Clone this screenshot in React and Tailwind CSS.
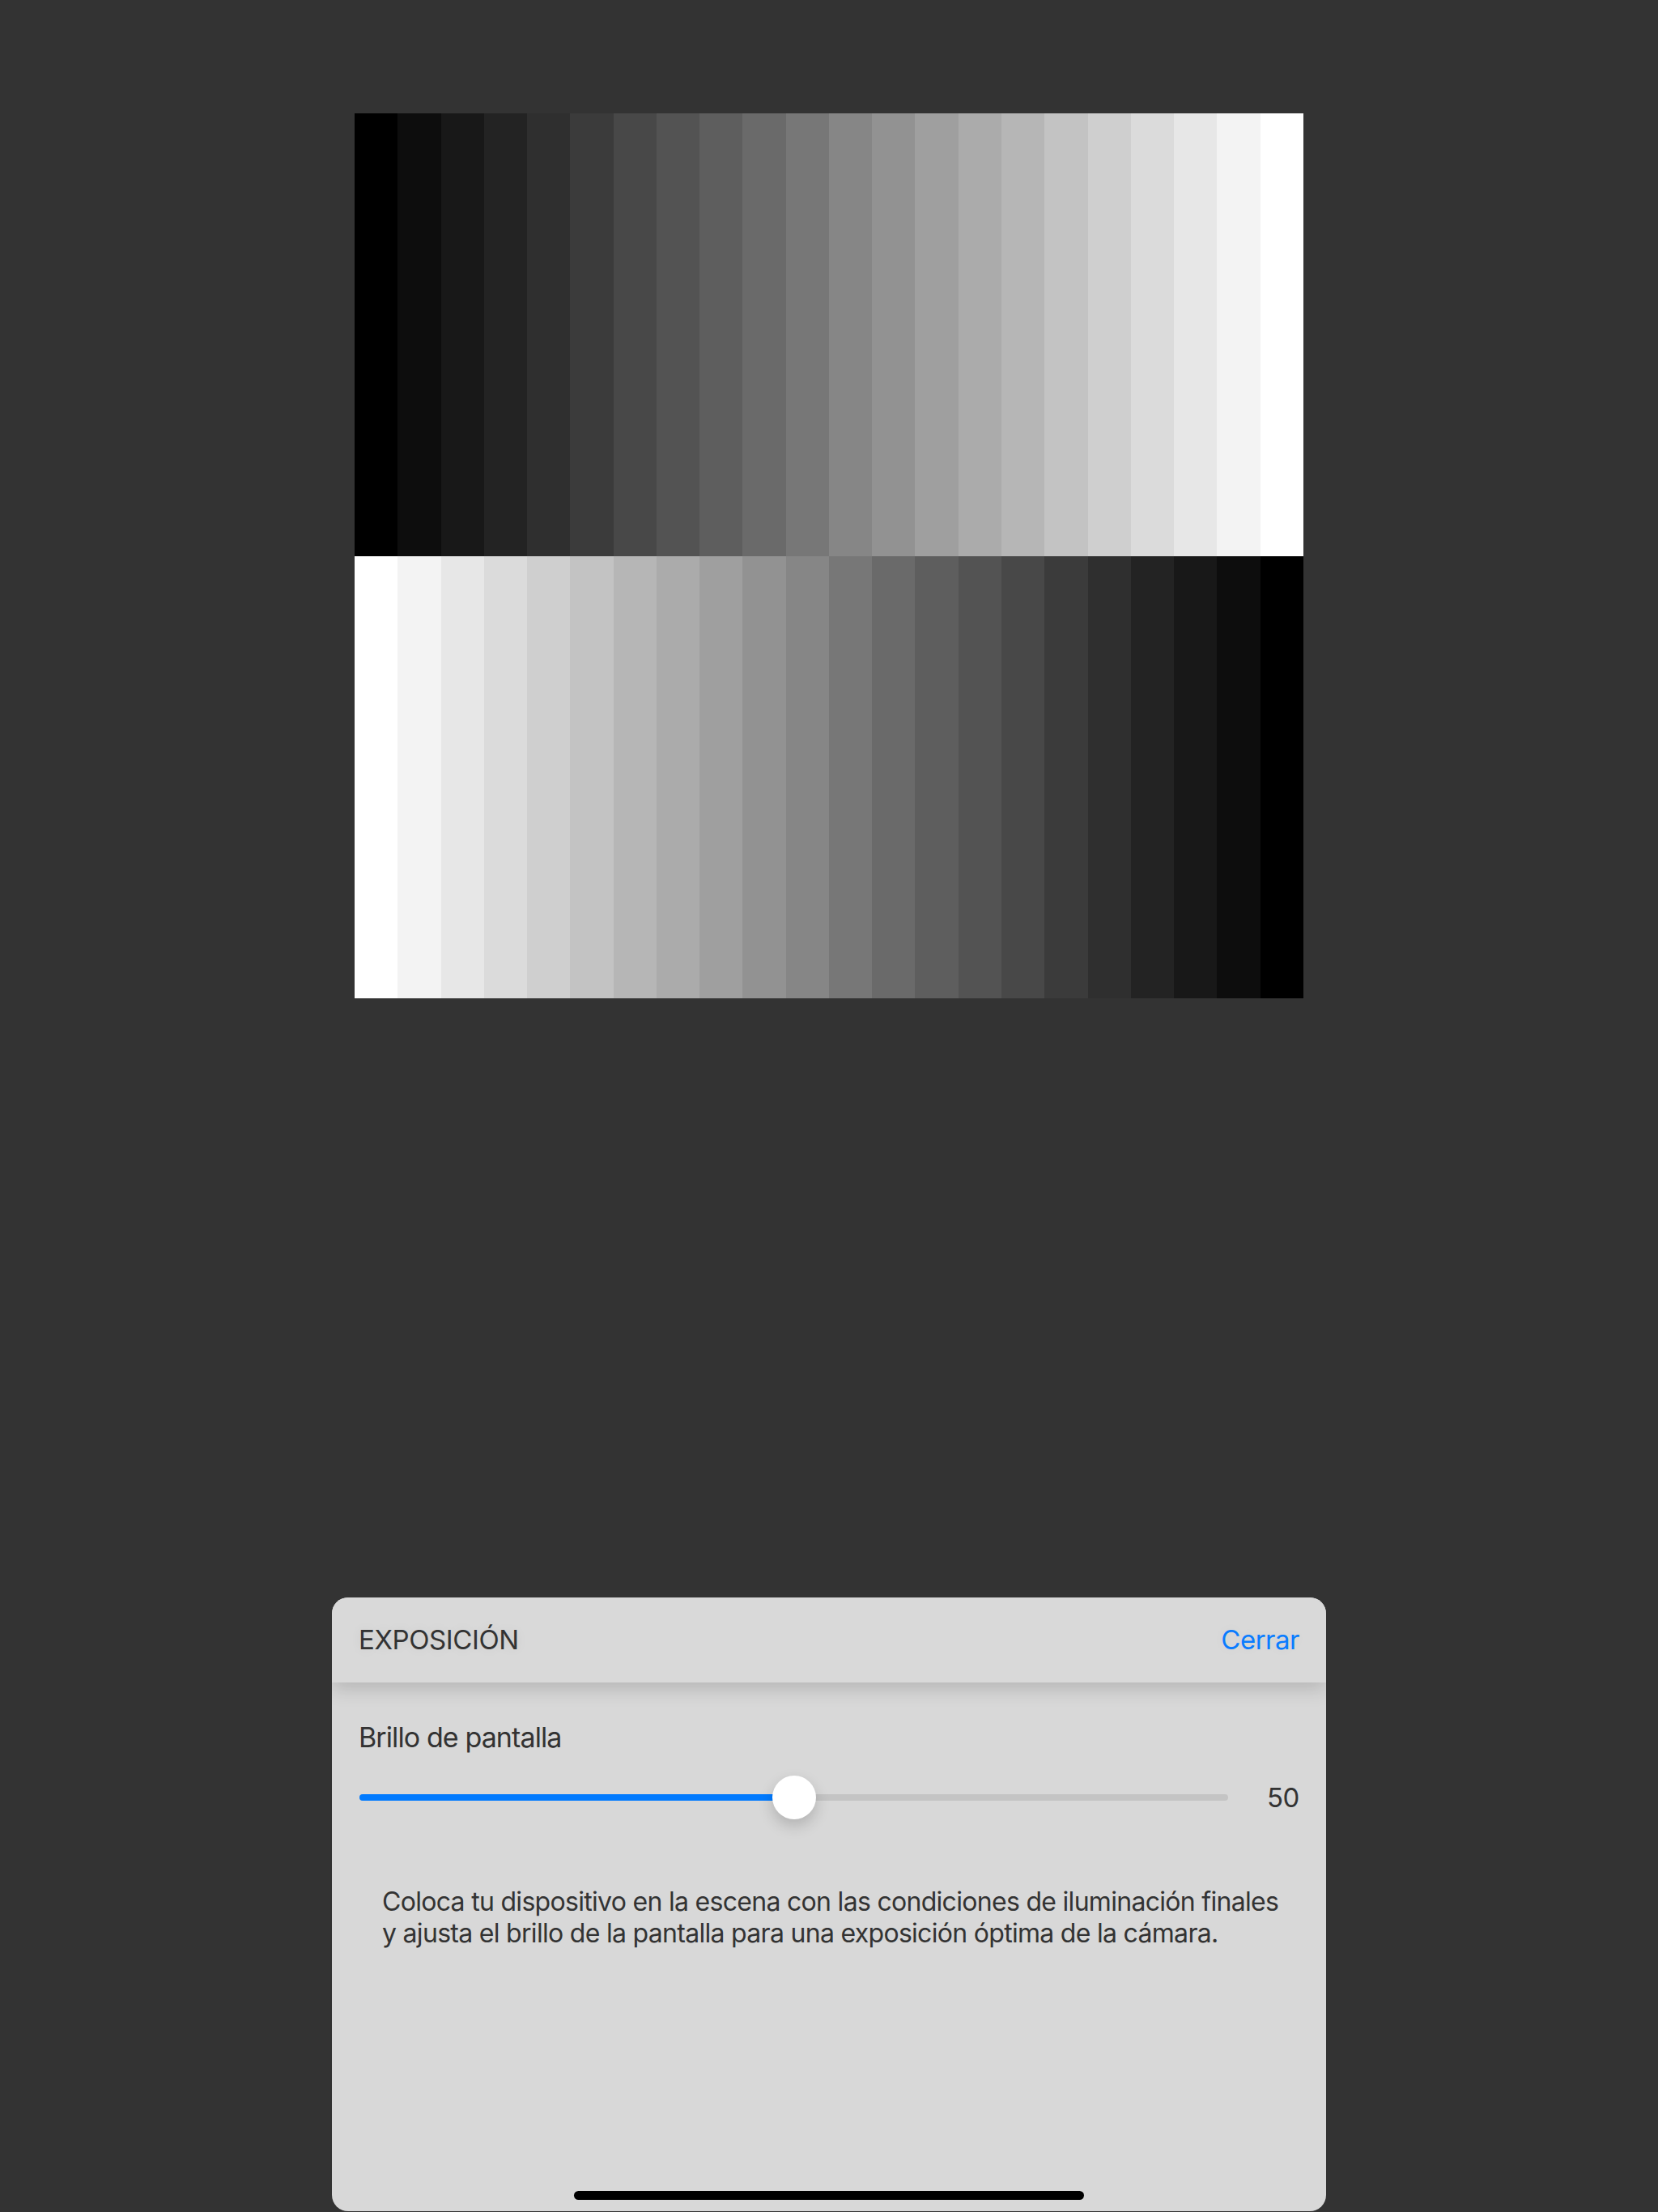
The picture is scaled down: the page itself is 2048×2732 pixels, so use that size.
import React from "react";

const TONES = [
  "#000000", "#0d0d0d", "#181818", "#232323", "#2f2f2f", "#3b3b3b",
  "#484848", "#535353", "#5e5e5e", "#6a6a6a", "#777777", "#868686",
  "#929292", "#9f9f9f", "#ababab", "#b6b6b6", "#c3c3c3", "#cfcfcf",
  "#dbdbdb", "#e7e7e7", "#f3f3f3", "#ffffff",
];

function Row({ tones }) {
  return (
    <div className="flex h-[546.5px] w-full">
      {tones.map((c, i) => (
        <div key={i} className="flex-1 h-full" style={{ backgroundColor: c }} />
      ))}
    </div>
  );
}

export default function App() {
  return (
    <div
      className="h-[2732px] w-full bg-[#333333] flex flex-col items-center overflow-hidden"
      style={{ fontFamily: "Inter, 'Noto Sans', 'Liberation Sans', sans-serif" }}
    >
      <div className="mt-[140px] w-[1172px] flex flex-col">
        <Row tones={TONES} />
        <Row tones={[...TONES].reverse()} />
      </div>

      <div className="mt-auto mb-[1px] w-[1228px] h-[758px] bg-[#d8d8d8] rounded-[20px] flex flex-col overflow-hidden">
        <div className="relative z-10 h-[105px] shrink-0 bg-[#d9d9d9] px-[33px] flex items-center justify-between shadow-[0_8px_22px_rgba(0,0,0,0.16)]">
          <span className="text-[33px] leading-none tracking-[-0.4px] text-[#333333] [text-shadow:0_0_14px_rgba(0,0,0,0.08)]">
            EXPOSICIÓN
          </span>
          <span className="text-[33px] leading-none tracking-[-0.5px] text-[#0a7cff] [text-shadow:0_0_14px_rgba(0,0,0,0.06)]">
            Cerrar
          </span>
        </div>

        <div className="px-[33px] pt-[47px] flex flex-col">
          <div className="text-[34px] leading-[41px] tracking-[-0.9px] text-[#333333]">Brillo de pantalla</div>

          <div className="mt-[27px] h-[54px] flex items-center pl-[1px]">
            <div className="relative flex-1 h-[8px] rounded-full bg-[#c4c4c4]">
              <div className="absolute left-0 top-0 h-full w-1/2 rounded-full bg-[#007aff]" />
              <div className="absolute left-1/2 top-1/2 -translate-x-1/2 -translate-y-1/2 w-[54px] h-[54px] rounded-full bg-white shadow-[0_8px_18px_rgba(0,0,0,0.18)]" />
            </div>
            <div className="w-[88px] text-right text-[33px] leading-none tracking-[-0.4px] text-[#333333]">50</div>
          </div>

          <p className="mt-[82px] pl-[29px] text-[32px] leading-[39px] tracking-[-0.7px] whitespace-nowrap text-[#333333]">
            Coloca tu dispositivo en la escena con las condiciones de iluminación finales
            <br />
            y ajusta el brillo de la pantalla para una exposición óptima de la cámara.
          </p>
        </div>

        <div className="flex-1" />
        <div className="self-center mb-[14px] w-[630px] h-[11px] rounded-full bg-black" />
      </div>
    </div>
  );
}
